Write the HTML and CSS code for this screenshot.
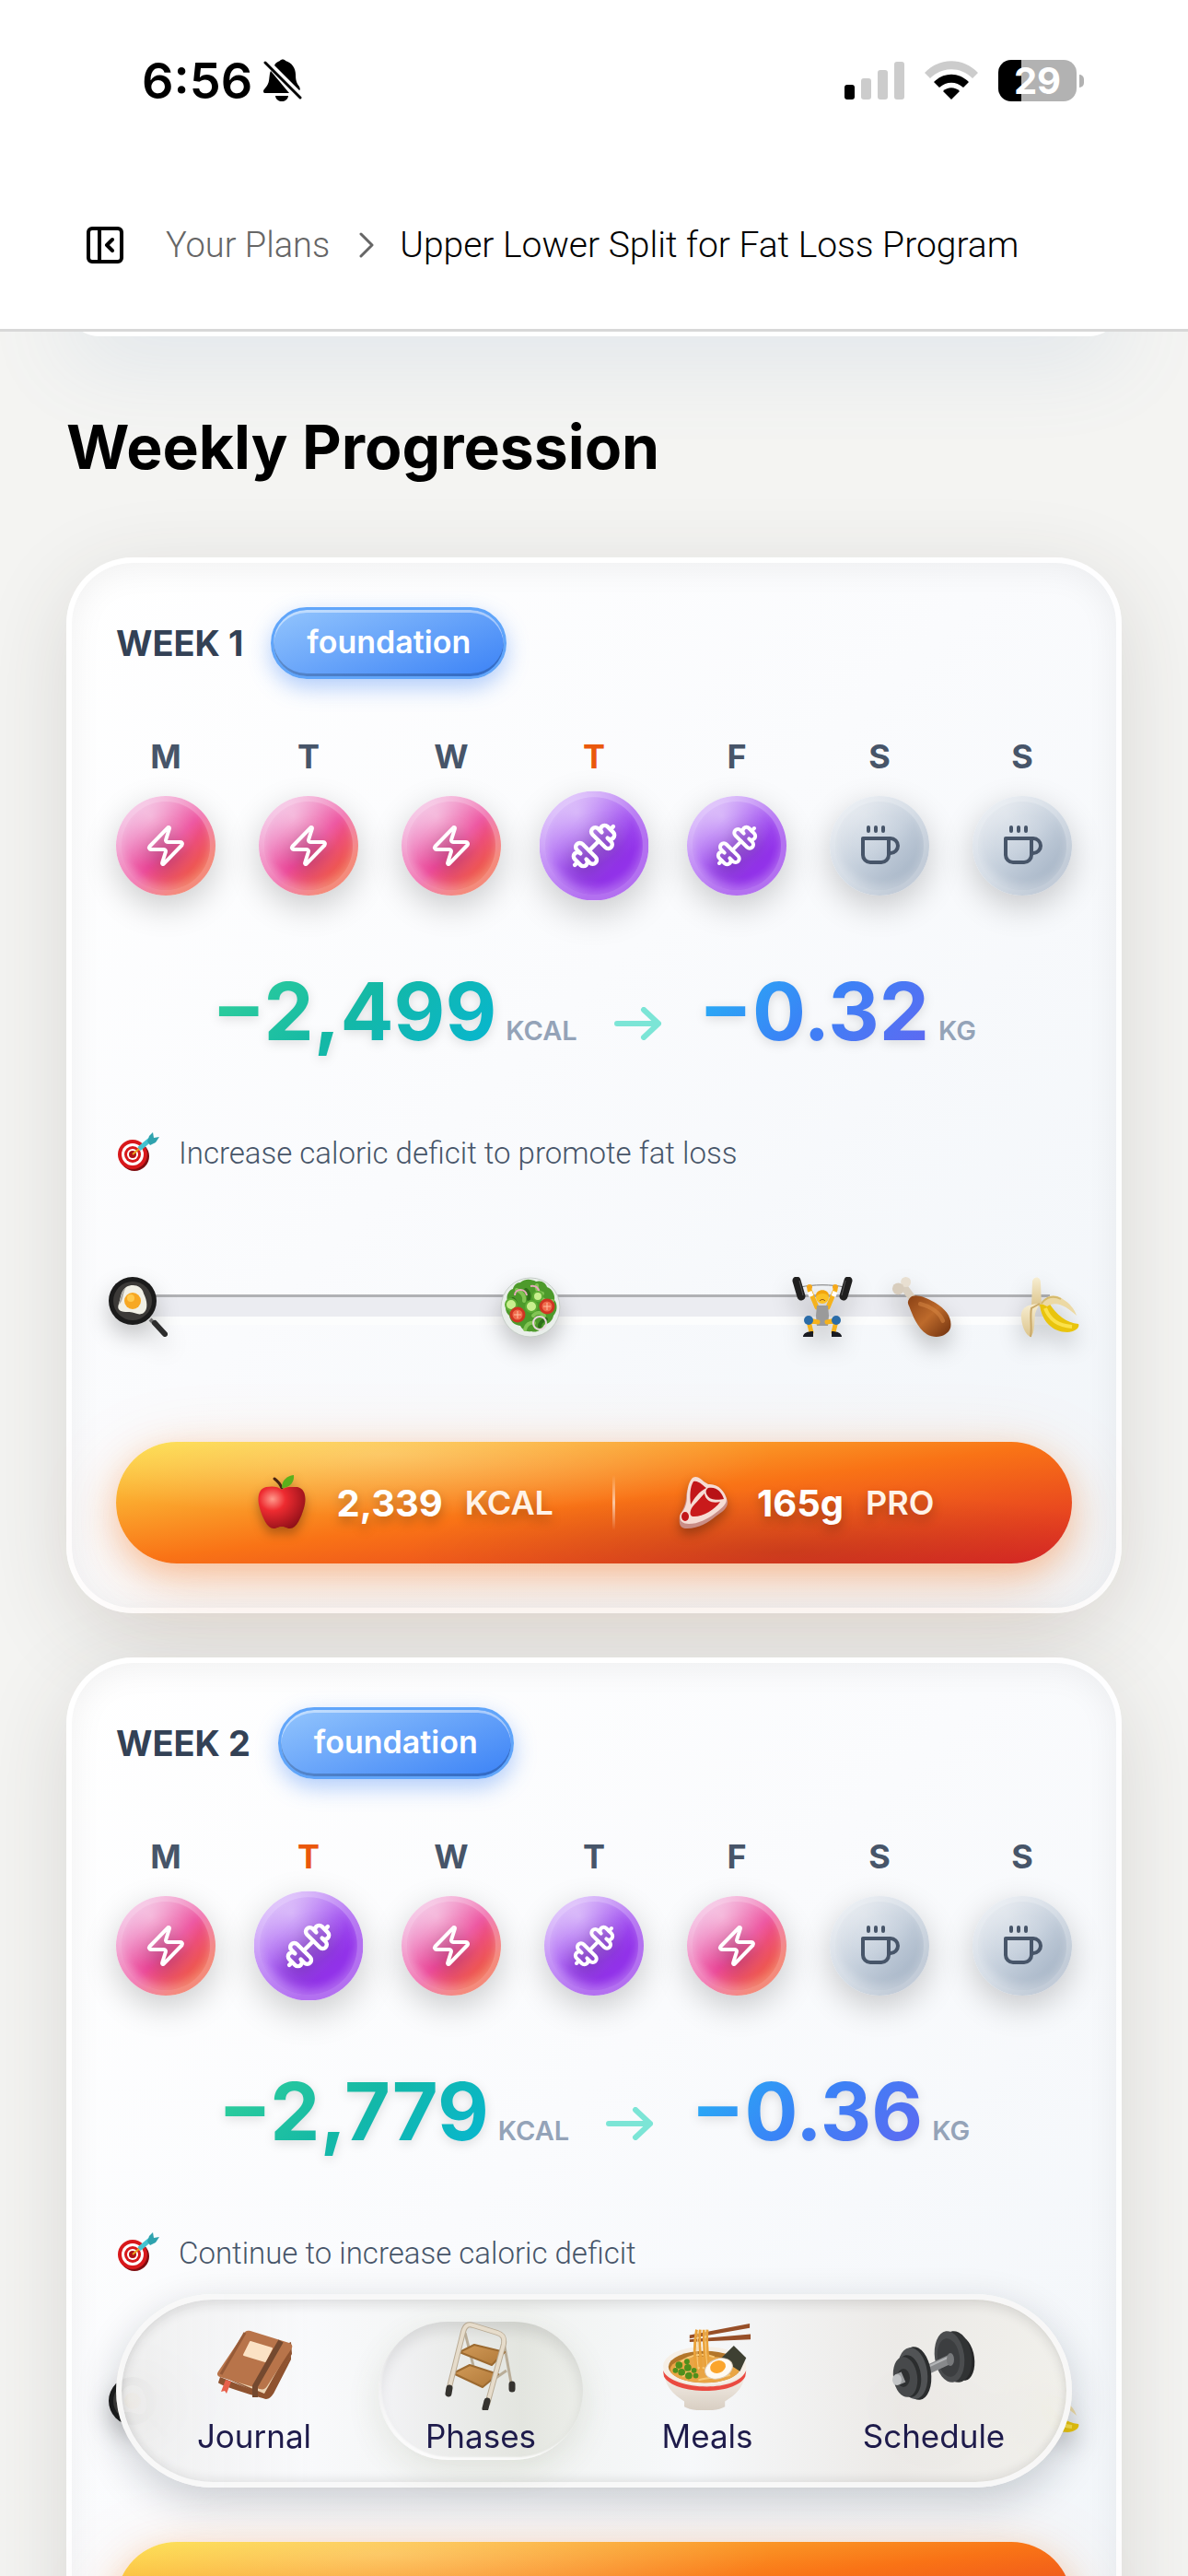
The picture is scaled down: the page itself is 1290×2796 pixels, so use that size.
FILE: index.html
```html
<!DOCTYPE html>
<html lang="en">

<head>
    <meta charset="UTF-8">
    <meta name="viewport" content="width=device-width, initial-scale=1.0">
    <title>Upper Lower Split for Fat Loss Program</title>
    <link rel="stylesheet" href="styles.css">
</head>

<body>
    <!-- icon sprite -->
    <svg class="sprite" aria-hidden="true">
        <defs>
            <radialGradient id="g-apple" cx=".3" cy=".3" r=".8">
                <stop offset="0" stop-color="#ff9a8c" />
                <stop offset=".35" stop-color="#ee2b30" />
                <stop offset="1" stop-color="#8e0f18" />
            </radialGradient>
            <linearGradient id="g-leg" x1="0" y1="0" x2="1" y2="1">
                <stop offset="0" stop-color="#8a4115" />
                <stop offset=".5" stop-color="#bd6a2b" />
                <stop offset="1" stop-color="#6e300e" />
            </linearGradient>
            <linearGradient id="g-peel" x1="0" y1="0" x2="0" y2="1">
                <stop offset="0" stop-color="#f7eed2" />
                <stop offset="1" stop-color="#dcc48c" />
            </linearGradient>
            <linearGradient id="g-bowl" x1="0" y1="0" x2="0" y2="1">
                <stop offset="0" stop-color="#fbf6f0" />
                <stop offset="1" stop-color="#d8cec2" />
            </linearGradient>
            <linearGradient id="g-wood" x1="0" y1="0" x2="1" y2="1">
                <stop offset="0" stop-color="#d19a58" />
                <stop offset="1" stop-color="#b07838" />
            </linearGradient>
        </defs>

        <symbol id="zap" viewBox="0 0 24 24">
            <path d="M4 14a1 1 0 0 1-.78-1.63l9.9-10.2a.5.5 0 0 1 .86.46l-1.92 6.02A1 1 0 0 0 13 10h7a1 1 0 0 1 .78 1.63l-9.9 10.2a.5.5 0 0 1-.86-.46l1.92-6.02A1 1 0 0 0 11 14z" />
        </symbol>
        <symbol id="lift" viewBox="0 0 24 24">
            <path d="M17.596 12.768a2 2 0 1 0 2.829-2.829l-1.768-1.767a2 2 0 0 0 2.828-2.829l-2.828-2.828a2 2 0 0 0-2.829 2.828l-1.767-1.768a2 2 0 1 0-2.829 2.829z" />
            <path d="m2.5 21.5 1.4-1.4M20.1 3.9l1.4-1.4M9.6 14.4l4.8-4.8" />
            <path d="M5.343 21.485a2 2 0 1 0 2.829-2.828l1.767 1.768a2 2 0 1 0 2.829-2.829l-6.364-6.364a2 2 0 1 0-2.829 2.829l1.768 1.767a2 2 0 0 0-2.828 2.829z" />
        </symbol>
        <symbol id="rest" viewBox="0 0 24 24">
            <path d="M17 8h1a4 4 0 1 1 0 8h-1M3 8h14v9a4 4 0 0 1-4 4H7a4 4 0 0 1-4-4ZM6 2v2M10 2v2M14 2v2" />
        </symbol>

        <symbol id="target" viewBox="0 0 48 48">
            <ellipse cx="20" cy="28" rx="16" ry="16" fill="#7e0d10" />
            <ellipse cx="18" cy="26" rx="16" ry="16" fill="#d8181b" />
            <ellipse cx="18" cy="26" rx="12" ry="12" fill="#fff" />
            <ellipse cx="18" cy="26" rx="9" ry="9" fill="#d8181b" />
            <ellipse cx="18" cy="26" rx="6" ry="6" fill="#fff" />
            <ellipse cx="18" cy="26" rx="4" ry="4" fill="#b01214" />
            <path d="m18 26 8-7" stroke="#e8a31c" stroke-width="2" />
            <path d="m25 20 12-10" stroke="#43c3d0" stroke-width="5" />
            <path d="m34 12 2-6 4-4 1 6 6-1-4 6-6 3z" fill="#2fa3ae" />
        </symbol>

        <symbol id="pan" viewBox="0 0 66 66">
            <path d="m46 46 5 5" stroke="#6d6d6d" stroke-width="4" />
            <path d="m51 50 11 12" stroke="#2d2d2d" stroke-width="6" stroke-linecap="round" />
            <circle cx="27" cy="26" r="26" fill="#1b1b1b" />
            <circle cx="27" cy="26" r="21" fill="#3c3a38" />
            <path d="M20 11c7-4 17-2 19 7 4 8 5 17 0 21-6 4-10-2-17-1-7 0-13-1-10-9 2-6 2-14 8-18z" fill="#f1f0e6" />
            <path d="M20 11c-5 4-6 12-8 19 5-3 4-13 8-19z" fill="#a9a6a0" />
            <circle cx="27" cy="26" r="9" fill="#f7a823" />
            <circle cx="25" cy="23" r="4" fill="#ffc94d" />
        </symbol>

        <symbol id="salad" viewBox="0 0 66 66">
            <circle cx="33" cy="33" r="32" fill="#e9eeea" stroke="#c4ccc6" stroke-width="1" />
            <path d="M22 6c6-5 13-3 17-1 6-2 11 2 12 6 6 2 9 9 8 14 4 5 3 13-1 17-1 6-6 9-10 10-3 6-9 9-14 7-6 1-10-2-12-6-7-1-11-5-12-11-5-4-5-12-2-16-2-6 2-12 6-13 1-4 4-7 8-7z" fill="#4d9a2b" />
            <path d="M18 14c6 2 9 7 8 12M40 9c-1 5 2 8 6 9M12 36c7-3 10 0 12 3M36 42c4-5 9-3 12 0M27 57c1-5 5-8 10-7M46 24c3 3 8 3 11 2" fill="none" stroke="#82c454" stroke-width="4" stroke-linecap="round" />
            <path d="M28 14c3 2 4 6 3 10M50 46c-4 1-7 4-7 8M14 24c3 2 3 5 2 8" fill="none" stroke="#2f6f1a" stroke-width="4" stroke-linecap="round" />
            <path d="M16 20c0-8 12-8 13 0M33 10c6-1 9 2 9 6" fill="none" stroke="#e8a9bd" stroke-width="2" />
            <circle cx="43" cy="50" r="7" fill="none" stroke="#e9d5da" stroke-width="2" />
            <g fill="#c9ef8f" stroke="#5fae35" stroke-width="2">
                <circle cx="12" cy="30" r="6" />
                <circle cx="34" cy="32" r="6" />
                <circle cx="41" cy="21" r="5" />
            </g>
            <g fill="#f06a4c" stroke="#cf3522" stroke-width="3">
                <circle cx="19" cy="41" r="7" />
                <circle cx="51" cy="32" r="7" />
            </g>
            <path d="M15 41h8M19 37v8M47 32h8M51 28v8" stroke="#ffc0a0" stroke-width="1" />
        </symbol>

        <symbol id="lifter" viewBox="0 0 66 66">
            <path d="M9 11c14-3 34-3 48 0" fill="none" stroke="#777" stroke-width="1" />
            <path d="m19 14 8 19M47 14l-8 19" stroke="#f5b21c" stroke-width="5" stroke-linecap="round" />
            <path d="m19 16 2 5M47 16l-2 5" stroke="#fff" stroke-width="5" />
            <path d="M27 31h12l1 11-1 11H27l-1-11z" fill="#9a9a9a" />
            <circle cx="33" cy="22" r="7" fill="#fbc125" />
            <path d="M26 21c-1-9 15-9 14 0-3-4-10-4-14 0z" fill="#f2a50f" />
            <path d="M30 26c2-2 4-2 6 0" fill="none" stroke="#8a4b10" stroke-width="1" />
            <path d="m28 49-10-2M38 49l10-2M18 48l3 12M48 48l-3 12" stroke="#f5b21c" stroke-width="5" stroke-linecap="round" />
            <circle cx="18" cy="47" r="5" fill="#2b6ca8" />
            <circle cx="48" cy="47" r="5" fill="#2b6ca8" />
            <path d="M12 65c0-4 5-6 11-6v6zM54 65c0-4-5-6-11-6v6z" fill="#191b22" />
            <circle cx="19" cy="11" r="3" fill="#f5a81a" />
            <circle cx="47" cy="11" r="3" fill="#f5a81a" />
            <path d="m5 4 5 17M61 4l-5 17" stroke="#1f1f1f" stroke-width="9" stroke-linecap="round" />
            <path d="m8 4 4 16M58 4l-4 16" stroke="#555" stroke-width="1" />
        </symbol>

        <symbol id="leg" viewBox="0 0 72 72">
            <path d="m14 11 12 16" stroke="#d9cfc0" stroke-width="9" />
            <circle cx="17" cy="6" r="6" fill="#e8dfd1" />
            <circle cx="8" cy="14" r="7" fill="#d8cdbd" />
            <path d="M21 26c4-7 16-4 30 4 15 9 21 19 19 30-3 10-17 14-28 8C30 60 25 45 21 35c-2-4-2-6 0-9z" fill="url(#g-leg)" />
            <path d="M34 32c12 3 23 10 27 20" fill="none" stroke="#d98a45" stroke-width="5" stroke-linecap="round" opacity=".5" />
        </symbol>

        <symbol id="banana" viewBox="0 0 66 66">
            <path d="M14 4c3-6 9-4 9 2l1 26H13z" fill="url(#g-peel)" />
            <path d="M22 30c2 18 14 30 30 30 8 0 14-5 12-9-13-1-24-10-32-23z" fill="#e9c40d" />
            <path d="M28 34c5 13 14 19 29 20" fill="none" stroke="#fbe14a" stroke-width="4" />
            <path d="M24 29c5-10 15-11 23-5 7 4 13 11 15 18-10-9-22-17-32-10z" fill="#ecd9a4" />
            <path d="M24 29c5-8 14-9 21-5" fill="none" stroke="#d5ba6c" stroke-width="2" />
            <path d="M22 29C8 30 1 33 2 45c1 10 5 18 10 20 5-4 4-18 5-25 1-4 3-7 5-11z" fill="url(#g-peel)" />
            <path d="M22 29 13 34c-2 10 1 20-1 31" fill="none" stroke="#caa968" stroke-width="2" />
        </symbol>

        <symbol id="apple" viewBox="0 0 60 60">
            <path d="M30 14C28 9 26 7 22 4" fill="none" stroke="#4a2413" stroke-width="3" stroke-linecap="round" />
            <path d="M30 16c4-4 11-3 17-3 9 2 10 13 7 23-3 10-8 22-15 22-4 0-5-2-9-2s-5 2-9 2C14 58 9 46 6 36 3 26 4 15 13 13c6-1 13-1 17 3z" fill="url(#g-apple)" />
            <path d="M30 14c0-8 5-13 13-14 1 7-4 14-13 14z" fill="#5bb01c" />
        </symbol>

        <symbol id="steak" viewBox="0 0 60 60">
            <path d="M20 8c2-5 8-5 12-1l5 4c10-2 18 7 21 17 1 8-6 12-13 17-7 6-18 13-31 13-8 0-9-5-8-14 4-7 7-13 7-20 0-6 3-11 7-16z" fill="#c98d86" />
            <path d="M20 3c5-3 9 1 12 4l5 3c11-1 18 8 20 16 0 7-7 11-13 16-8 6-18 11-28 11-8 0-11-4-9-11 5-5 7-12 7-19 0-8 2-16 6-20z" fill="#f6dcd4" />
            <path d="M21 7c5-2 11 5 14 7-8 4-13 11-17 18-1-9-1-19 3-25z" fill="#c31619" />
            <path d="M37 14c9-2 15 5 17 12-5 1-15 2-18-4-2-3-2-6 1-8z" fill="#b81216" />
            <path d="M33 20c1 9 10 11 17 9-6 9-20 17-30 16-4-1-3-8 2-13 4-4 7-8 11-12z" fill="#c91a1b" />
            <ellipse cx="12" cy="45" rx="4" ry="5" fill="#c31619" />
        </symbol>

        <symbol id="book" viewBox="0 0 96 96">
            <path d="m9 57 52 25 28-47-1-13z" fill="#8f5330" />
            <path d="m11 58 48 20 28-50" fill="#ecd4b4" />
            <path d="m9 66c0 3 48 17 52 18 3 0 6-3 8-6l19-37v-5L61 80 11 60z" fill="#8f5330" />
            <path d="M36 14c2-4 4-5 8-4l42 13c4 2 4 4 2 7L62 70c-2 3-4 4-8 3L11 60c-3-1-4-3-2-6z" fill="#b8744a" />
            <path d="M38 12 12 57" stroke="#965a37" stroke-width="3" />
            <path d="m44 22 23 7-7 14-23-7z" fill="#fbe2c4" stroke="#fbe2c4" stroke-width="2" stroke-linejoin="round" />
            <path d="M77 21 49 70v12" fill="none" stroke="#74492f" stroke-width="6" stroke-linejoin="round" />
            <path d="m17 63-5 13 4-1 2 3 5-13z" fill="#e8604a" />
        </symbol>

        <symbol id="ladder" viewBox="0 0 96 96">
            <path d="m31 12 9 36M73 22l9 50M60 64l16-11" fill="none" stroke="#b9ad98" stroke-width="3" />
            <path d="m25 33 16-8 33 8-14 14z" fill="url(#g-wood)" stroke="#9c6a30" stroke-width="2" stroke-linejoin="round" />
            <path d="m18 56 18-9 31 10-17 14z" fill="url(#g-wood)" stroke="#9c6a30" stroke-width="2" stroke-linejoin="round" />
            <path d="M13 75 29 11c2-7 5-9 11-7l26 8c6 2 8 5 7 12L55 90" fill="none" stroke="#b9ab95" stroke-width="6" />
            <path d="M13 75 29 11c2-7 5-9 11-7l26 8c6 2 8 5 7 12L55 90" fill="none" stroke="#e6dccb" stroke-width="4" />
            <path d="m14 72-1 6M55 86l-2 8M82 68v5" stroke="#35332f" stroke-width="7" stroke-linecap="round" />
        </symbol>

        <symbol id="ramen" viewBox="0 0 100 100">
            <path d="M0 50c1 24 12 32 24 40v6c10 6 36 6 46 0v-6c13-8 23-16 24-40z" fill="url(#g-bowl)" />
            <path d="M0 55c8 22 84 27 94 0l-1 7c-12 23-82 20-92 0z" fill="#ea4a40" />
            <ellipse cx="47" cy="50" rx="47" ry="22" fill="#f6efe6" />
            <ellipse cx="47" cy="51" rx="41" ry="18" fill="#b3762a" />
            <ellipse cx="47" cy="54" rx="39" ry="15" fill="#e9a545" />
            <path d="M14 52c10-14 30-18 44-12M22 62c10-12 24-12 36-6M40 66c12-4 26-2 36-6" fill="none" stroke="#f8c875" stroke-width="2" />
            <path d="m80 27 14 14-7 15-22-14z" fill="#3e4032" />
            <path d="M30 15 98 2v5L30 19zM30 20l69-6v6l-69 3z" fill="#974f28" />
            <path d="M38 9c-3 16-3 32 0 46M42 9c-2 15 1 30 1 46M46 9c0 14 1 32 3 46M50 9c-1 12 0 24 1 34" fill="none" stroke="#eaa23a" stroke-width="3" />
            <path d="M40 10c-2 16-2 32 0 44M48 10c-1 14 1 30 2 42" fill="none" stroke="#f9cc7b" stroke-width="1" />
            <ellipse cx="63" cy="53" rx="16" ry="11" transform="rotate(-20 63 53)" fill="#fffaf2" stroke="#dccdb9" stroke-width="1" />
            <ellipse cx="62" cy="51" rx="9" ry="7" transform="rotate(-20 62 51)" fill="#fba52c" />
            <g fill="#4f8f1c">
                <circle cx="18" cy="49" r="4" /><circle cx="27" cy="45" r="3" /><circle cx="28" cy="52" r="4" /><circle cx="14" cy="55" r="3" />
                <circle cx="21" cy="57" r="4" /><circle cx="35" cy="55" r="3" /><circle cx="29" cy="61" r="4" /><circle cx="37" cy="61" r="3" />
            </g>
        </symbol>

        <symbol id="dumbbell" viewBox="0 0 96 96">
            <g transform="translate(3 10)">
                <ellipse cx="76" cy="30" rx="13" ry="24" fill="#262728" transform="rotate(-8 76 30)" />
                <ellipse cx="69" cy="28" rx="17" ry="28" fill="#313334" transform="rotate(-8 69 28)" />
                <ellipse cx="62" cy="28" rx="16" ry="28" fill="#4b4d4f" transform="rotate(-8 62 28)" />
                <ellipse cx="61" cy="29" rx="12" ry="21" fill="#3c3e40" transform="rotate(-8 61 29)" />
                <path d="m34 44 28-13" stroke="#87898b" stroke-width="10" />
                <path d="m34 41 28-13" stroke="#b4b6b8" stroke-width="2" />
                <ellipse cx="63" cy="31" rx="4" ry="7" fill="#77797b" />
                <ellipse cx="26" cy="46" rx="16" ry="29" fill="#2b2d2e" transform="rotate(-8 26 46)" />
                <ellipse cx="22" cy="46" rx="16" ry="28" fill="#515355" transform="rotate(-8 22 46)" />
                <ellipse cx="18" cy="49" rx="13" ry="23" fill="#2b2d2e" transform="rotate(-8 18 49)" />
                <ellipse cx="14" cy="50" rx="13" ry="22" fill="#47494b" transform="rotate(-8 14 50)" />
                <ellipse cx="12" cy="51" rx="7" ry="10" fill="#2e3031" />
                <path d="m5 53 7-3" stroke="#9b9d9f" stroke-width="12" />
                <ellipse cx="5" cy="53" rx="5" ry="6" fill="#c3c5c7" />
            </g>
        </symbol>
    </svg>

    <header class="topbar">
        <div class="status">
            <div class="status-left">
                <span class="clock">6:56</span>
                <svg class="bell" viewBox="0 0 42 46">
                    <path d="M8 13c-2 4-1 10-3 14-1 3-5 6-5 8 0 2 1 2 3 2h25z" />
                    <path d="M12 7c1-3 4-4 6-5 1-2 5-2 6 0 7 2 11 8 11 15 0 6 1 9 4 13 1 2 1 4 0 4z" />
                    <path d="M13 40h14c-1 8-13 8-14 0z" />
                    <path d="m2 4 38 38" fill="none" stroke="#000" stroke-width="3" stroke-linecap="round" />
                </svg>
            </div>
            <div class="status-right">
                <svg class="bars" viewBox="0 0 65 41">
                    <rect x="0" y="25" width="11" height="16" rx="3" />
                    <g fill="#ccc">
                        <rect x="18" y="18" width="11" height="23" rx="3" />
                        <rect x="36" y="9" width="11" height="32" rx="3" />
                        <rect x="54" y="0" width="11" height="41" rx="3" />
                    </g>
                </svg>
                <svg class="wifi" viewBox="0 0 58 42">
                    <path d="M0 13C16-4 42-4 58 13l-6 6C39 6 19 6 6 19z" fill="#ccc" />
                    <path d="M10 23c11-11 27-11 38 0l-6 6c-8-7-18-7-26 0z" />
                    <path d="M20 33c5-5 13-5 18 0l-9 9z" />
                </svg>
                <div class="battery">29</div>
            </div>
        </div>
        <nav class="crumbs">
            <button type="button" class="toggle" aria-label="Toggle sidebar">
                <svg viewBox="0 0 24 24">
                    <rect x="3" y="3" width="18" height="18" rx="2" />
                    <path d="M9 3v18M16 15l-3-3 3-3" />
                </svg>
            </button>
            <a href="#plans">Your Plans</a>
            <svg class="chevron" viewBox="0 0 24 24"><path d="m9 18 6-6-6-6" /></svg>
            <span class="current">Upper Lower Split for Fat Loss Program</span>
        </nav>
    </header>

    <main>
        <div class="prev-card"></div>
        <h1>Weekly Progression</h1>

        <section class="card">
            <div class="card-head">
                <h2>WEEK 1</h2>
                <span class="phase">foundation</span>
            </div>
            <div class="days">
                <div class="day"><span>M</span><div class="orb pink"><svg><use href="#zap" /></svg></div></div>
                <div class="day"><span>T</span><div class="orb pink"><svg><use href="#zap" /></svg></div></div>
                <div class="day"><span>W</span><div class="orb pink"><svg><use href="#zap" /></svg></div></div>
                <div class="day today"><span>T</span><div class="orb purple"><svg><use href="#lift" /></svg></div></div>
                <div class="day"><span>F</span><div class="orb purple"><svg><use href="#lift" /></svg></div></div>
                <div class="day"><span>S</span><div class="orb gray"><svg><use href="#rest" /></svg></div></div>
                <div class="day"><span>S</span><div class="orb gray"><svg><use href="#rest" /></svg></div></div>
            </div>
            <div class="stats">
                <div class="stat"><strong class="green">−2,499</strong><span>KCAL</span></div>
                <svg class="arrow" viewBox="0 0 52 36"><path d="M3 18h45M32 3l16 15-16 15" /></svg>
                <div class="stat"><strong class="blue">−0.32</strong><span>KG</span></div>
            </div>
            <p class="goal"><svg><use href="#target" /></svg>Increase caloric deficit to promote fat loss</p>
            <div class="timeline">
                <div class="track"></div>
                <svg class="pin" style="left: 0%"><use href="#pan" /></svg>
                <svg class="pin" style="left: 43%"><use href="#salad" /></svg>
                <svg class="pin" style="left: 75%"><use href="#lifter" /></svg>
                <svg class="pin" style="left: 86%"><use href="#leg" /></svg>
                <svg class="pin" style="left: 100%"><use href="#banana" /></svg>
            </div>
            <div class="macros">
                <div class="macro"><svg><use href="#apple" /></svg><b>2,339</b><span>KCAL</span></div>
                <div class="divider"></div>
                <div class="macro"><svg><use href="#steak" /></svg><b>165g</b><span>PRO</span></div>
            </div>
        </section>

        <section class="card">
            <div class="card-head">
                <h2>WEEK 2</h2>
                <span class="phase">foundation</span>
            </div>
            <div class="days">
                <div class="day"><span>M</span><div class="orb pink"><svg><use href="#zap" /></svg></div></div>
                <div class="day today"><span>T</span><div class="orb purple"><svg><use href="#lift" /></svg></div></div>
                <div class="day"><span>W</span><div class="orb pink"><svg><use href="#zap" /></svg></div></div>
                <div class="day"><span>T</span><div class="orb purple"><svg><use href="#lift" /></svg></div></div>
                <div class="day"><span>F</span><div class="orb pink"><svg><use href="#zap" /></svg></div></div>
                <div class="day"><span>S</span><div class="orb gray"><svg><use href="#rest" /></svg></div></div>
                <div class="day"><span>S</span><div class="orb gray"><svg><use href="#rest" /></svg></div></div>
            </div>
            <div class="stats">
                <div class="stat"><strong class="green">−2,779</strong><span>KCAL</span></div>
                <svg class="arrow" viewBox="0 0 52 36"><path d="M3 18h45M32 3l16 15-16 15" /></svg>
                <div class="stat"><strong class="blue">−0.36</strong><span>KG</span></div>
            </div>
            <p class="goal"><svg><use href="#target" /></svg>Continue to increase caloric deficit</p>
            <div class="timeline">
                <div class="track"></div>
                <svg class="pin" style="left: 0%"><use href="#pan" /></svg>
                <svg class="pin" style="left: 43%"><use href="#salad" /></svg>
                <svg class="pin" style="left: 86%"><use href="#leg" /></svg>
                <svg class="pin" style="left: 100%"><use href="#banana" /></svg>
            </div>
            <div class="macros"></div>
        </section>
    </main>

    <nav class="tabbar">
        <a href="#journal"><svg><use href="#book" /></svg>Journal</a>
        <a href="#phases" class="active"><svg><use href="#ladder" /></svg>Phases</a>
        <a href="#meals"><svg><use href="#ramen" /></svg>Meals</a>
        <a href="#schedule"><svg><use href="#dumbbell" /></svg>Schedule</a>
    </nav>
</body>

</html>
```
FILE: styles.css
```css
* {
    box-sizing: border-box;
}

body {
    margin: 0;
    height: 100vh;
    overflow: hidden;
    display: flex;
    flex-direction: column;
    background-color: #f4f4f2;
    font-family: Inter, "Liberation Sans", sans-serif;
    color: #000;
}

h1,
h2,
p {
    margin: 0;
}

a {
    text-decoration: none;
}

.sprite {
    position: absolute;
    width: 0;
    height: 0;
}

/* header */
.topbar {
    flex: none;
    position: relative;
    z-index: 2;
    background: #fff;
    border-bottom: 3px solid #d8d8d8;
}

.status {
    display: flex;
    justify-content: space-between;
    align-items: center;
    height: 174px;
    padding: 0 121px 0 154px;
}

.status-left,
.status-right {
    display: flex;
    align-items: center;
}

.status-left {
    gap: 12px;
}

.status-right {
    gap: 22px;
}

.clock {
    font-size: 54px;
    font-weight: 600;
}

.bell {
    width: 42px;
    height: 46px;
}

.bars {
    width: 65px;
    height: 41px;
}

.wifi {
    width: 58px;
    height: 42px;
}

.battery {
    position: relative;
    width: 85px;
    height: 45px;
    border-radius: 14px;
    background: linear-gradient(90deg, #000 29%, #b2b2b2 29%);
    color: #fff;
    font-size: 40px;
    font-weight: 700;
    line-height: 45px;
    text-align: center;
}

.battery::after {
    content: "";
    position: absolute;
    top: 16px;
    right: -8px;
    width: 5px;
    height: 14px;
    border-radius: 0 6px 6px 0;
    background: #b2b2b2;
}

.crumbs {
    display: flex;
    align-items: center;
    gap: 16px;
    height: 183px;
    padding: 0 90px;
    font-family: Roboto, "Liberation Sans", sans-serif;
    font-size: 38px;
    font-weight: 300;
    white-space: nowrap;
}

.crumbs a {
    color: #666;
}

.crumbs .current {
    font-size: 39px;
}

.toggle {
    width: 48px;
    height: 48px;
    margin-right: 26px;
    padding: 0;
    border: none;
    background: none;
}

.toggle svg,
.chevron {
    display: block;
    width: 48px;
    height: 48px;
    fill: none;
    stroke: #000;
    stroke-width: 2;
    stroke-linecap: round;
    stroke-linejoin: round;
}

.chevron {
    margin-right: -4px;
    stroke: #666;
    stroke-width: 1.5;
}

/* content */
main {
    flex: 1;
    min-height: 0;
    overflow: hidden;
    padding: 0 72px;
}

.prev-card {
    height: 80px;
    margin-top: -75px;
    border: 6px solid #fff;
    border-radius: 36px;
    background: #fff;
    box-shadow: 0 24px 96px rgba(100, 140, 190, .14);
}

h1 {
    margin: 72px 0;
    font-size: 66px;
    font-weight: 700;
    line-height: 96px;
}

.card {
    margin-bottom: 48px;
    padding: 48px;
    border: 6px solid rgba(255, 255, 255, .8);
    border-radius: 72px;
    background: linear-gradient(135deg, #fff 0%, #fafbfd 45%, #f1f5f9 100%) border-box;
    box-shadow: 0 24px 96px rgba(60, 50, 40, .14), inset 0 6px 36px rgba(0, 0, 0, .06);
}

.card-head {
    display: flex;
    align-items: center;
    gap: 30px;
    height: 78px;
}

h2 {
    color: #334155;
    font-size: 38px;
    font-weight: 700;
}

.phase {
    height: 78px;
    padding: 0 36px;
    border: 3px solid #60a5fa;
    border-radius: 39px;
    background: linear-gradient(160deg, #93c5fd, #3b82f6);
    box-shadow: 0 9px 24px rgba(59, 130, 246, .4), inset 0 3px rgba(255, 255, 255, .45), inset 0 -3px rgba(0, 0, 0, .2);
    color: #fff;
    font-size: 34px;
    font-weight: 600;
    line-height: 70px;
}

.days {
    display: flex;
    justify-content: space-between;
    margin-top: 60px;
}

.day {
    display: flex;
    flex-direction: column;
    align-items: center;
    gap: 19px;
    color: #475569;
    font-size: 36px;
    font-weight: 700;
    line-height: 48px;
}

.orb {
    display: flex;
    align-items: center;
    justify-content: center;
    width: 108px;
    height: 108px;
    border: 6px solid rgba(255, 255, 255, .3);
    border-radius: 50%;
    background-origin: border-box;
    box-shadow: 0 12px 36px rgba(0, 0, 0, .2), inset 0 -6px 9px rgba(255, 255, 255, .2), inset 6px 3px 18px rgba(255, 255, 255, .2);
    color: #fff;
}

.orb svg {
    width: 48px;
    height: 48px;
    fill: none;
    stroke: currentColor;
    stroke-width: 2;
    stroke-linecap: round;
    stroke-linejoin: round;
    filter: drop-shadow(0 6px 9px rgba(0, 0, 0, .35));
}

.pink {
    background-image: radial-gradient(circle at 35% 20%, rgba(255, 255, 255, .45), rgba(255, 255, 255, 0) 50%), linear-gradient(135deg, #ee9fd6 10%, #ec4899 52%, #ef5a44 80%);
}

.purple {
    background-image: radial-gradient(circle at 35% 20%, rgba(255, 255, 255, .45), rgba(255, 255, 255, 0) 50%), linear-gradient(135deg, #c08bf8 15%, #a04ef0 50%, #9333ea 70%);
}

.gray {
    background-image: radial-gradient(circle at 35% 20%, rgba(255, 255, 255, .3), rgba(255, 255, 255, 0) 50%), linear-gradient(135deg, #d8dfe8 15%, #c3cedb 50%, #a9b7c8 80%);
    color: #475569;
}

.gray svg {
    filter: none;
}

.today {
    color: #ea580c;
}

.today .orb {
    transform: scale(1.1);
}

.stats {
    display: flex;
    align-items: baseline;
    justify-content: center;
    gap: 40px;
    margin-top: 72px;
    height: 108px;
}

.stat {
    display: flex;
    align-items: baseline;
    gap: 10px;
}

.stat strong {
    background-clip: text;
    color: transparent;
    font-size: 86px;
    font-weight: 700;
    line-height: 108px;
    filter: drop-shadow(0 3px 6px rgba(0, 0, 0, .12));
}

.stat .green {
    background-image: linear-gradient(135deg, #34d399, #14b8a6 50%, #06b6d4);
}

.stat .blue {
    background-image: linear-gradient(135deg, #22b8f5, #3b82f6 50%, #6366f1);
}

.stat span {
    color: #94a3b8;
    font-size: 29px;
    font-weight: 600;
}

.arrow {
    width: 52px;
    height: 36px;
    fill: none;
    stroke: #7ce5d6;
    stroke-width: 6;
    stroke-linecap: round;
    stroke-linejoin: round;
}

.goal {
    display: flex;
    align-items: center;
    gap: 20px;
    height: 48px;
    margin-top: 75px;
    color: #475569;
    font-family: Roboto, "Liberation Sans", sans-serif;
    font-size: 33px;
    font-weight: 300;
}

.goal svg {
    width: 48px;
    height: 48px;
}

.timeline {
    position: relative;
    height: 66px;
    margin: 111px 24px 113px;
    padding-top: 19px;
}

.track {
    height: 24px;
    border-top: 3px solid #b0b1b4;
    background: #ebecf1;
    box-shadow: 0 9px #fcfdfd;
}

.pin {
    position: absolute;
    top: 0;
    width: 66px;
    height: 66px;
    margin-left: -33px;
    filter: drop-shadow(0 12px 12px rgba(0, 0, 0, .22));
}

.macros {
    display: flex;
    align-items: center;
    justify-content: center;
    gap: 64px;
    height: 132px;
    border-radius: 66px;
    background: radial-gradient(ellipse at 28% 10%, rgba(255, 255, 255, .25), rgba(255, 255, 255, 0) 40%), radial-gradient(ellipse at 70% 90%, rgba(0, 0, 0, .12), rgba(0, 0, 0, 0) 40%), linear-gradient(to bottom right, #fde047 0%, #f97316 50%, #dc2626 100%);
    box-shadow: 0 12px 36px rgba(249, 115, 22, .35), 0 24px 90px rgba(249, 115, 22, .18);
    color: #fff;
}

.macro {
    display: flex;
    align-items: center;
    gap: 24px;
    font-size: 36px;
    font-weight: 600;
    text-shadow: 0 6px 12px rgba(0, 0, 0, .25);
}

.macro svg {
    width: 60px;
    height: 60px;
    margin-right: 6px;
    filter: drop-shadow(0 6px 6px rgba(0, 0, 0, .3));
}

.macro b {
    font-size: 40px;
    font-weight: 700;
}

.macro span {
    color: #fff3e8;
}

.divider {
    width: 3px;
    height: 60px;
    background: linear-gradient(rgba(255, 255, 255, 0), rgba(255, 255, 255, .6), rgba(255, 255, 255, 0));
}

/* floating tab bar */
.tabbar {
    position: fixed;
    right: 126px;
    bottom: 96px;
    left: 126px;
    z-index: 3;
    display: flex;
    align-items: center;
    height: 210px;
    padding: 0 21px;
    border: 6px solid rgba(248, 248, 248, .9);
    border-radius: 105px;
    background: linear-gradient(90deg, rgba(238, 238, 238, .9), rgba(248, 249, 251, .95) 20%, rgba(240, 242, 240, .95) 42%, rgba(246, 248, 250, .95) 60%, rgba(235, 233, 230, .95) 82%, rgba(240, 239, 234, .95));
    box-shadow: 0 15px 45px rgba(15, 23, 42, .2), inset 0 6px 12px rgba(0, 0, 0, .1), inset 0 -6px 9px rgba(0, 0, 0, .05);
    backdrop-filter: blur(30px);
}

.tabbar a {
    flex: 1;
    display: flex;
    flex-direction: column;
    align-items: center;
    gap: 4px;
    height: 150px;
    margin: 0 12px;
    border-radius: 75px;
    color: #1e1b4b;
    font-size: 35px;
    line-height: 48px;
}

.tabbar svg {
    width: 96px;
    height: 96px;
}

.tabbar .active {
    background: linear-gradient(90deg, rgba(243, 243, 246, .9), rgba(226, 228, 222, .9) 70%, rgba(236, 238, 233, .9));
    box-shadow: 0 12px 36px rgba(90, 100, 60, .12), inset 0 9px 15px rgba(0, 0, 0, .1), inset 3px -3px 2px rgba(255, 255, 255, .9);
}
```
